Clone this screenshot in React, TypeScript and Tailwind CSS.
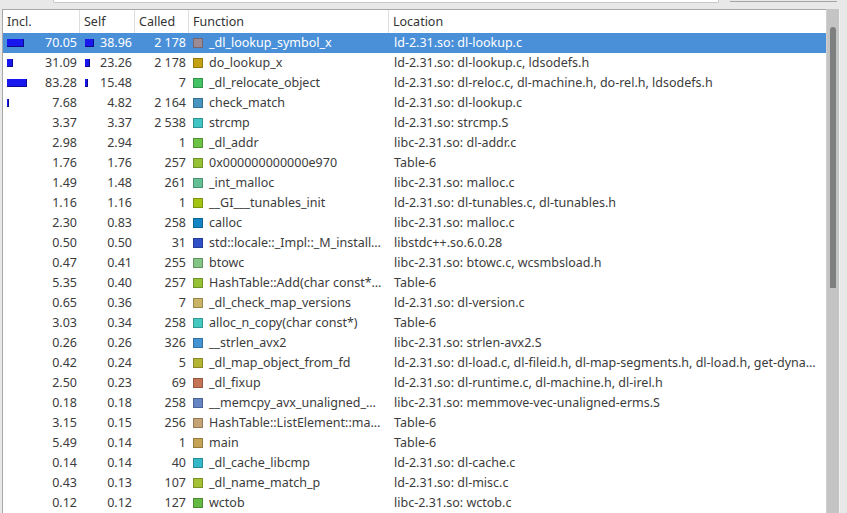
import React from 'react';

type Row = {
  incl: string;
  self: string;
  called: string;
  fn: string;
  loc: string;
  sq: string;
  ib?: string;
  sb?: string;
  sel?: boolean;
};

const rows: Row[] = [
  { incl: '70.05', self: '38.96', called: '2 178', fn: '_dl_lookup_symbol_x', loc: 'ld-2.31.so: dl-lookup.c', sq: 'bg-[#9c8a94]', ib: 'w-[17px]', sb: 'w-[9px]', sel: true },
  { incl: '31.09', self: '23.26', called: '2 178', fn: 'do_lookup_x', loc: 'ld-2.31.so: dl-lookup.c, ldsodefs.h', sq: 'bg-[#c4a014]', ib: 'w-[6px]', sb: 'w-[5px]' },
  { incl: '83.28', self: '15.48', called: '7', fn: '_dl_relocate_object', loc: 'ld-2.31.so: dl-reloc.c, dl-machine.h, do-rel.h, ldsodefs.h', sq: 'bg-[#44c264]', ib: 'w-[20px]', sb: 'w-[3px]' },
  { incl: '7.68', self: '4.82', called: '2 164', fn: 'check_match', loc: 'ld-2.31.so: dl-lookup.c', sq: 'bg-[#4894c0]', ib: 'w-[2px]' },
  { incl: '3.37', self: '3.37', called: '2 538', fn: 'strcmp', loc: 'ld-2.31.so: strcmp.S', sq: 'bg-[#40c4c4]' },
  { incl: '2.98', self: '2.94', called: '1', fn: '_dl_addr', loc: 'libc-2.31.so: dl-addr.c', sq: 'bg-[#6cc244]' },
  { incl: '1.76', self: '1.76', called: '257', fn: '0x000000000000e970', loc: 'Table-6', sq: 'bg-[#94c234]' },
  { incl: '1.49', self: '1.48', called: '261', fn: '_int_malloc', loc: 'libc-2.31.so: malloc.c', sq: 'bg-[#64c094]' },
  { incl: '1.16', self: '1.16', called: '1', fn: '__GI___tunables_init', loc: 'ld-2.31.so: dl-tunables.c, dl-tunables.h', sq: 'bg-[#a4c414]' },
  { incl: '2.30', self: '0.83', called: '258', fn: 'calloc', loc: 'libc-2.31.so: malloc.c', sq: 'bg-[#1484c4]' },
  { incl: '0.50', self: '0.50', called: '31', fn: 'std::locale::_Impl::_M_install…', loc: 'libstdc++.so.6.0.28', sq: 'bg-[#3050c8]' },
  { incl: '0.47', self: '0.41', called: '255', fn: 'btowc', loc: 'libc-2.31.so: btowc.c, wcsmbsload.h', sq: 'bg-[#84c484]' },
  { incl: '5.35', self: '0.40', called: '257', fn: 'HashTable::Add(char const*…', loc: 'Table-6', sq: 'bg-[#94c234]' },
  { incl: '0.65', self: '0.36', called: '7', fn: '_dl_check_map_versions', loc: 'ld-2.31.so: dl-version.c', sq: 'bg-[#c8b464]' },
  { incl: '3.03', self: '0.34', called: '258', fn: 'alloc_n_copy(char const*)', loc: 'Table-6', sq: 'bg-[#44c8c0]' },
  { incl: '0.26', self: '0.26', called: '326', fn: '__strlen_avx2', loc: 'libc-2.31.so: strlen-avx2.S', sq: 'bg-[#4494d4]' },
  { incl: '0.42', self: '0.24', called: '5', fn: '_dl_map_object_from_fd', loc: 'ld-2.31.so: dl-load.c, dl-fileid.h, dl-map-segments.h, dl-load.h, get-dyna…', sq: 'bg-[#b4b434]' },
  { incl: '2.50', self: '0.23', called: '69', fn: '_dl_fixup', loc: 'ld-2.31.so: dl-runtime.c, dl-machine.h, dl-irel.h', sq: 'bg-[#c47454]' },
  { incl: '0.18', self: '0.18', called: '258', fn: '__memcpy_avx_unaligned_…', loc: 'libc-2.31.so: memmove-vec-unaligned-erms.S', sq: 'bg-[#6484c4]' },
  { incl: '3.15', self: '0.15', called: '256', fn: 'HashTable::ListElement::ma…', loc: 'Table-6', sq: 'bg-[#c4a474]' },
  { incl: '5.49', self: '0.14', called: '1', fn: 'main', loc: 'Table-6', sq: 'bg-[#c4a454]' },
  { incl: '0.14', self: '0.14', called: '40', fn: '_dl_cache_libcmp', loc: 'ld-2.31.so: dl-cache.c', sq: 'bg-[#34b8c8]' },
  { incl: '0.43', self: '0.13', called: '107', fn: '_dl_name_match_p', loc: 'ld-2.31.so: dl-misc.c', sq: 'bg-[#a4c034]' },
  { incl: '0.12', self: '0.12', called: '127', fn: 'wctob', loc: 'libc-2.31.so: wctob.c', sq: 'bg-[#64b844]' },
];

const cols = 'grid grid-cols-[77px_55px_54px_200px_1fr]';

const Bar: React.FC<{ w?: string }> = ({ w }) =>
  w ? <span className={`${w} h-[8px] bg-[#1818ee] border-r border-b border-[#0a0a8a] shrink-0`} /> : null;

export default function App() {
  return (
    <div
      className="w-[847px] h-[513px] bg-[#e8e8e8] overflow-hidden flex flex-col text-[12.5px] text-[#3c3c3c]"
      style={{ fontFamily: '"Noto Sans", "Open Sans", sans-serif' }}
    >
      {/* search bar remnants above the list */}
      <div className="h-[9px] flex items-start shrink-0">
        <div className="ml-[53px] w-[666px] h-[3px] bg-white border border-t-0 border-[#c8c8c8] rounded-b-[2px]" />
        <div className="ml-[11px] w-[107px] h-[2px] border-b border-[#a4a4a4]" />
      </div>

      <div className="flex flex-1 min-h-0 pl-[2px]">
        <div className="w-[824px] bg-white border-l border-t border-[#a8a8a8] flex flex-col min-h-0">
          <div className={`${cols} h-[23px] items-stretch text-[#333]`}>
            <div className="border-r border-[#dedede] pl-[4px] pt-[1px] flex items-center">Incl.</div>
            <div className="border-r border-[#dedede] pl-[4px] pt-[1px] flex items-center">Self</div>
            <div className="border-r border-[#dedede] pl-[4px] pt-[1px] flex items-center">Called</div>
            <div className="border-r border-[#dedede] pl-[4px] pt-[1px] flex items-center">Function</div>
            <div className="pl-[4px] pt-[1px] flex items-center">Location</div>
          </div>
          {rows.map((r) => (
            <div
              key={r.fn}
              className={`${cols} h-[20px] shrink-0 items-center whitespace-nowrap ${r.sel ? 'bg-[#4a90d9] text-white' : ''}`}
            >
              <div className="flex items-center pl-[4px] pr-[3px]">
                <Bar w={r.ib} />
                <span className="ml-auto">{r.incl}</span>
              </div>
              <div className="flex items-center pl-[5px] pr-[3px]">
                <Bar w={r.sb} />
                <span className="ml-auto">{r.self}</span>
              </div>
              <div className="text-right pr-[3px]">{r.called}</div>
              <div className="flex items-center pl-[4px] overflow-hidden">
                <span className={`${r.sq} w-[10px] h-[10px] border border-black/25 shrink-0 mr-[6px]`} />
                <span>{r.fn}</span>
              </div>
              <div className="pl-[5px] overflow-hidden">{r.loc}</div>
            </div>
          ))}
        </div>

        {/* vertical scrollbar */}
        <div className="w-[13px] bg-[#c3c4c3] border-l border-[#cfcfcf] pt-[18px] flex justify-center">
          <div className="w-[6px] h-[261px] bg-[#7e807f] rounded-t-full rounded-b-[2px]" />
        </div>
        <div className="w-[1px] bg-[#f2f2f2]" />
      </div>
    </div>
  );
}
